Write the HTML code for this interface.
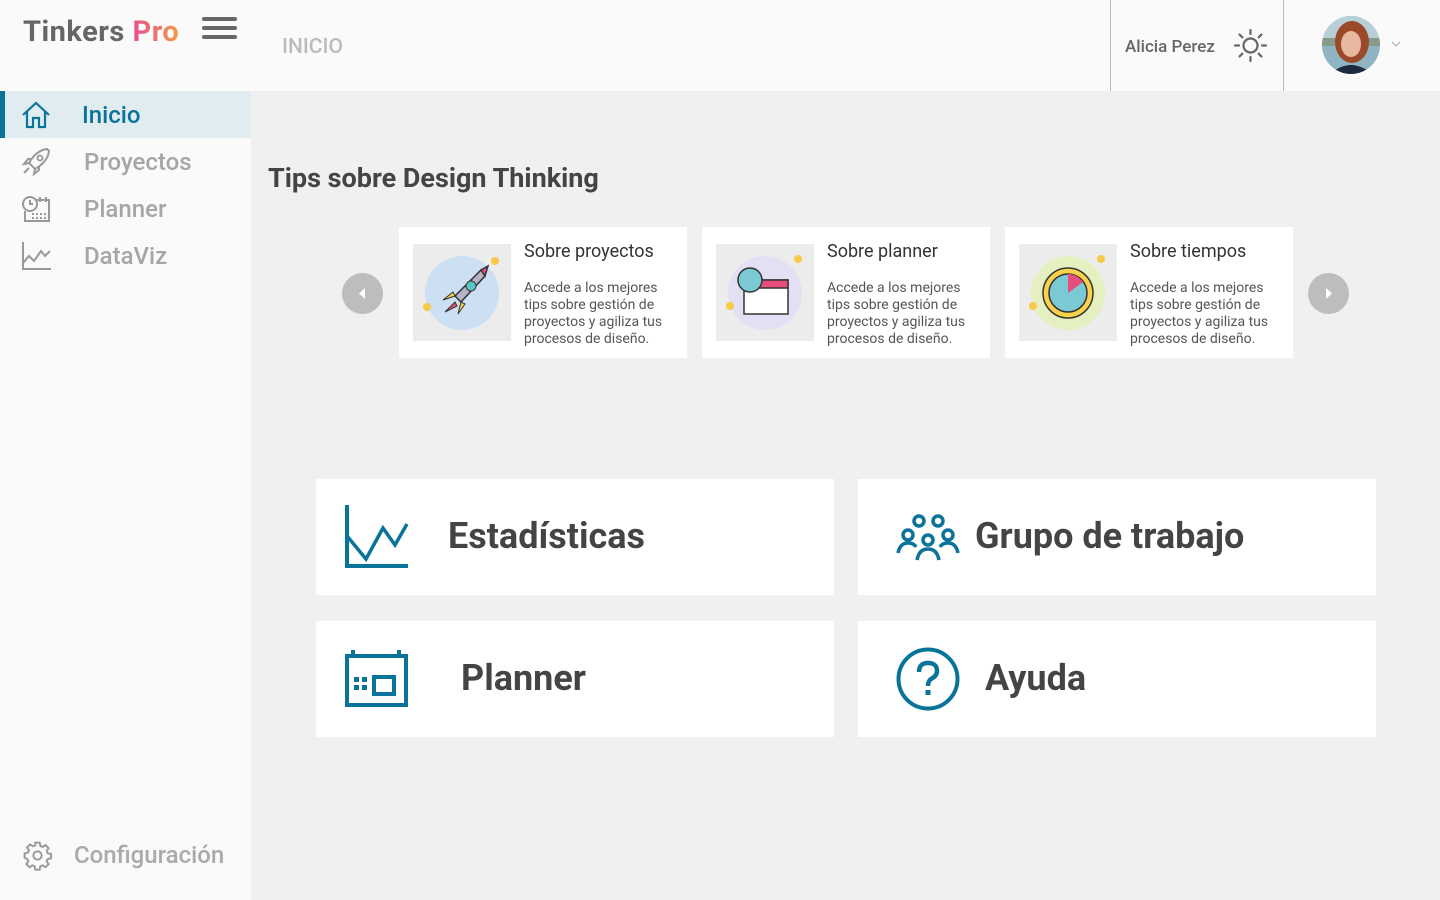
<!DOCTYPE html>
<html><head><meta charset="utf-8"><style>
*{margin:0;padding:0;box-sizing:border-box}
body{width:1440px;height:900px;background:#f0f0f0;font-family:"Roboto","Liberation Sans",sans-serif;position:relative;overflow:hidden}
.abs{position:absolute}
.hdr{left:0;top:0;width:1440px;height:91px;background:#fafafa}
.side{left:0;top:91px;width:251px;height:809px;background:#fafafa}
.nav{position:absolute;left:0;width:251px;height:47px;font-size:24px;font-weight:500;color:#a6a6a6;line-height:47px}
.nav span{position:absolute;left:84px;top:1px}
.nav svg{position:absolute;left:20px;top:8px}
.card{background:#fff;width:288px;height:131px;top:227px}
.card .img{position:absolute;left:14px;top:17px;width:98px;height:97px;background:#ececec}
.card h3{position:absolute;left:125px;top:14px;font-size:18px;font-weight:normal;color:#333}
.card p{position:absolute;left:125px;top:53px;font-size:14px;line-height:17px;color:#555;width:150px}
.big{background:#fff;width:518px;height:116px}
.big span{position:absolute;font-size:36px;font-weight:bold;color:#444;top:50%;transform:translateY(-52%)}
.arr{width:41px;height:41px;border-radius:50%;background:#bdbdbd;top:273px}
</style></head><body>
<div class="abs hdr"></div>
<div class="abs" style="left:23px;top:15px;font-size:29px;font-weight:bold;color:#666;letter-spacing:0.5px">Tinkers <span style="background:linear-gradient(90deg,#e8508a,#f49a45);-webkit-background-clip:text;color:transparent">Pro</span></div>
<svg class="abs" style="left:202px;top:16px" width="35" height="24"><g stroke="#666" stroke-width="4" stroke-linecap="round"><line x1="2" y1="3" x2="33" y2="3"/><line x1="2" y1="12" x2="33" y2="12"/><line x1="2" y1="21" x2="33" y2="21"/></g></svg>
<div class="abs" style="left:282px;top:35px;font-size:21px;font-weight:500;color:#bbb">INICIO</div>
<div class="abs" style="left:1110px;top:0;width:1px;height:91px;background:#bbb"></div>
<div class="abs" style="left:1283px;top:0;width:1px;height:91px;background:#bbb"></div>
<div class="abs" style="left:1125px;top:37px;font-size:17px;font-weight:500;color:#666">Alicia Perez</div>
<svg class="abs" style="left:1233px;top:28px" width="35" height="35" viewBox="0 0 35 35"><g stroke="#666" stroke-width="2.2" fill="none" stroke-linecap="round"><circle cx="17.5" cy="17.5" r="7"/><line x1="17.5" y1="2" x2="17.5" y2="6"/><line x1="17.5" y1="29" x2="17.5" y2="33"/><line x1="2" y1="17.5" x2="6" y2="17.5"/><line x1="29" y1="17.5" x2="33" y2="17.5"/><line x1="6.5" y1="6.5" x2="9.3" y2="9.3"/><line x1="25.7" y1="25.7" x2="28.5" y2="28.5"/><line x1="6.5" y1="28.5" x2="9.3" y2="25.7"/><line x1="25.7" y1="9.3" x2="28.5" y2="6.5"/></g></svg>
<svg class="abs" style="left:1322px;top:16px" width="58" height="58"><defs><clipPath id="c"><circle cx="29" cy="29" r="29"/></clipPath></defs><g clip-path="url(#c)"><rect width="58" height="58" fill="#8fb5c4"/><rect y="0" width="58" height="22" fill="#b8cfd8"/><rect y="22" width="58" height="8" fill="#8a9a88"/><ellipse cx="30" cy="26" rx="17" ry="21" fill="#9a4a2a"/><ellipse cx="29" cy="28" rx="10" ry="13" fill="#e8b9a0"/><path d="M8 58 Q29 40 50 58Z" fill="#1e2a40"/></g></svg>
<svg class="abs" style="left:1391px;top:41px" width="10" height="7"><path d="M1 1 L5 5 L9 1" stroke="#aaa" fill="none"/></svg>

<div class="abs side"></div>
<div class="nav" style="top:91px;background:#e1ecf0;color:#0a739a"><div class="abs" style="left:0;top:0;width:5px;height:47px;background:#0a739a"></div><svg width="32" height="32" viewBox="0 0 32 32"><path d="M3 16 L16 4 L29 16 M7 13 V28 H13 V19 H19 V28 H25 V13" stroke="#0a739a" stroke-width="2.2" fill="none"/></svg><span style="left:82px">Inicio</span></div>
<div class="nav" style="top:138px"><svg width="32" height="32" viewBox="0 0 32 32"><path d="M27 3 C19 4 13 10 9 17 L15 23 C22 19 28 13 29 5 Z M9 17 L4 18 L8 13 H12 M15 23 L14 28 L19 24 V20 M9 22 L4 27" stroke="#999" stroke-width="2" fill="none"/><circle cx="20" cy="12" r="2.5" stroke="#999" stroke-width="1.8" fill="none"/></svg><span>Proyectos</span></div>
<div class="nav" style="top:185px"><svg width="32" height="32" viewBox="0 0 32 32"><g stroke="#999" stroke-width="2" fill="none"><circle cx="10" cy="11" r="7"/><path d="M10 7 V11 H13 M15 7 H29 V28 H5 V18 M20 4 V9 M26 4 V9"/></g><g fill="#999"><rect x="12" y="20" width="2" height="2"/><rect x="16" y="20" width="2" height="2"/><rect x="20" y="20" width="2" height="2"/><rect x="24" y="20" width="2" height="2"/><rect x="12" y="24" width="2" height="2"/><rect x="16" y="24" width="2" height="2"/><rect x="20" y="24" width="2" height="2"/><rect x="24" y="24" width="2" height="2"/></g></svg><span>Planner</span></div>
<div class="nav" style="top:232px"><svg width="32" height="32" viewBox="0 0 32 32"><path d="M3 2 V29 H31 M3 23 L9 16 L14 21 L21 11 L25 16 L30 11" stroke="#999" stroke-width="2" fill="none"/></svg><span>DataViz</span></div>
<svg class="abs" style="left:22px;top:840px" width="31" height="31" viewBox="0 0 24 24"><g stroke="#999" stroke-width="1.5" fill="none"><circle cx="12" cy="12" r="3.2"/><path d="M10.3 2h3.4l.5 2.6 1.8.8 2.2-1.5 2.4 2.4-1.5 2.2.8 1.8 2.6.5v3.4l-2.6.5-.8 1.8 1.5 2.2-2.4 2.4-2.2-1.5-1.8.8-.5 2.6h-3.4l-.5-2.6-1.8-.8-2.2 1.5-2.4-2.4 1.5-2.2-.8-1.8L2 13.7v-3.4l2.6-.5.8-1.8-1.5-2.2 2.4-2.4 2.2 1.5 1.8-.8z"/></g></svg>
<div class="abs" style="left:74px;top:841px;font-size:24px;font-weight:500;color:#aaa">Configuración</div>

<div class="abs" style="left:268px;top:162px;font-size:27px;font-weight:bold;color:#444">Tips sobre Design Thinking</div>
<div class="abs arr" style="left:342px"><svg width="41" height="41"><path d="M23 15 L17 20.5 L23 26Z" fill="#fff"/></svg></div>
<div class="abs arr" style="left:1308px"><svg width="41" height="41"><path d="M18 15 L24 20.5 L18 26Z" fill="#fff"/></svg></div>

<div class="abs card" style="left:399px"><div class="img"><svg width="98" height="97"><circle cx="49" cy="49" r="37" fill="#cde0f3"/><path d="M68 26 L42 52 L48 58 L72 32 Z" fill="#b7b3c6" stroke="#333" stroke-width="1.5"/><path d="M68 26 L75 22 L72 32 Z" fill="#e84e7c" stroke="#333" stroke-width="1.5"/><circle cx="58" cy="42" r="5" fill="#5cc6c6" stroke="#333"/><path d="M42 52 L30 56 L40 48Z M48 58 L45 70 L52 60Z" fill="#f7d24a" stroke="#333"/><path d="M42 58 L32 68 L44 62Z" fill="#e84e7c" stroke="#333"/><circle cx="82" cy="17" r="4" fill="#f7c948"/><circle cx="14" cy="63" r="4" fill="#f7c948"/></svg></div><h3>Sobre proyectos</h3><p>Accede a los mejores tips sobre gestión de proyectos y agiliza tus procesos de diseño.</p></div>
<div class="abs card" style="left:702px"><div class="img"><svg width="98" height="97"><circle cx="49" cy="49" r="37" fill="#e3e0f3"/><rect x="28" y="36" width="44" height="34" fill="#fff" stroke="#333" stroke-width="1.5"/><rect x="28" y="36" width="44" height="8" fill="#e84e7c" stroke="#333" stroke-width="1.5"/><circle cx="34" cy="36" r="12" fill="#7cc9d6" stroke="#333" stroke-width="1.5"/><circle cx="82" cy="15" r="4" fill="#f7c948"/><circle cx="14" cy="62" r="4" fill="#f7c948"/></svg></div><h3>Sobre planner</h3><p>Accede a los mejores tips sobre gestión de proyectos y agiliza tus procesos de diseño.</p></div>
<div class="abs card" style="left:1005px"><div class="img"><svg width="98" height="97"><circle cx="49" cy="49" r="37" fill="#e5f0c0"/><circle cx="49" cy="49" r="25" fill="#f7d24a" stroke="#333" stroke-width="1.5"/><circle cx="49" cy="49" r="19" fill="#7cc9d6" stroke="#333" stroke-width="1.5"/><path d="M49 30 A19 19 0 0 1 64 38 L49 49Z" fill="#e84e7c"/><circle cx="82" cy="15" r="4" fill="#f7c948"/><circle cx="14" cy="62" r="4" fill="#f7c948"/></svg></div><h3>Sobre tiempos</h3><p>Accede a los mejores tips sobre gestión de proyectos y agiliza tus procesos de diseño.</p></div>

<div class="abs big" style="left:316px;top:479px"><svg class="abs" style="left:28px;top:25px" width="66" height="66"><path d="M3 1 V62 H64" stroke="#0a739a" stroke-width="4" fill="none"/><path d="M3 32 L22 55 L39 24 L51 41 L63 20" stroke="#0a739a" stroke-width="3.5" fill="none"/></svg><span style="left:132px">Estadísticas</span></div>
<div class="abs big" style="left:858px;top:479px"><svg class="abs" style="left:38px;top:34px" width="64" height="48" viewBox="0 0 64 48"><g stroke="#0a739a" stroke-width="3.5" fill="none"><circle cx="23" cy="8" r="5"/><circle cx="42" cy="8" r="5"/><circle cx="12" cy="22" r="5"/><circle cx="32" cy="27" r="5"/><circle cx="52" cy="22" r="5"/><path d="M2 40 Q4 30 12 30 Q18 30 20 34 M62 40 Q60 30 52 30 Q46 30 44 34 M21 47 Q23 36 32 36 Q41 36 43 47"/></g></svg><span style="left:117px">Grupo de trabajo</span></div>
<div class="abs big" style="left:316px;top:621px"><svg class="abs" style="left:28px;top:29px" width="66" height="58"><g fill="#0a739a"><rect x="1" y="4" width="63" height="4"/><rect x="1" y="4" width="4" height="53"/><rect x="60" y="4" width="4" height="53"/><rect x="1" y="53" width="63" height="4"/><rect x="7" y="0" width="4" height="8"/><rect x="53" y="0" width="4" height="8"/><rect x="10" y="27" width="5" height="5"/><rect x="18" y="27" width="5" height="5"/><rect x="10" y="35" width="5" height="5"/><rect x="18" y="35" width="5" height="5"/></g><rect x="30" y="27" width="20" height="17" stroke="#0a739a" stroke-width="4" fill="none"/></svg><span style="left:145px">Planner</span></div>
<div class="abs big" style="left:858px;top:621px"><svg class="abs" style="left:38px;top:26px" width="64" height="64"><circle cx="32" cy="32" r="29.5" stroke="#0a739a" stroke-width="4" fill="none"/><path d="M23 25 Q23 16 32 16 Q41 16 41 24 Q41 29 35 32 Q32 34 32 39" stroke="#0a739a" stroke-width="4.5" fill="none"/><rect x="29.5" y="43" width="5" height="5" fill="#0a739a"/></svg><span style="left:127px">Ayuda</span></div>
</body></html>
